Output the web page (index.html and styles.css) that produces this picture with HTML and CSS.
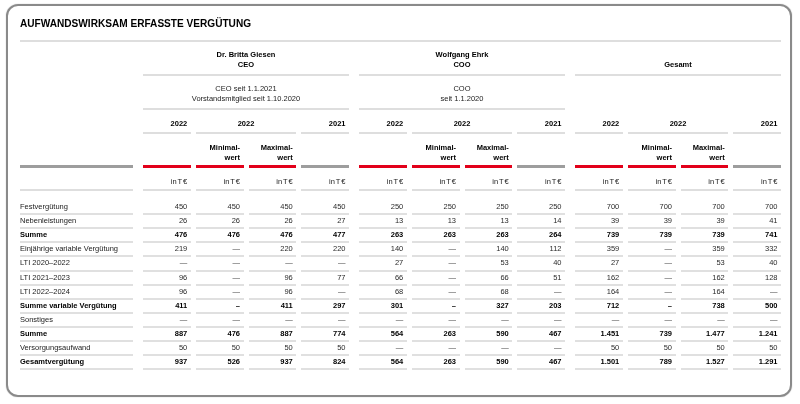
FILE: index.html
```html
<!DOCTYPE html>
<html lang="de">
<head>
<meta charset="utf-8">
<title>Aufwandswirksam erfasste Vergütung</title>
<link rel="stylesheet" href="styles.css">
</head>
<body>
<div class="frame">
  <h1 class="title">AUFWANDSWIRKSAM ERFASSTE VERGÜTUNG</h1>

  <div class="row hn">
    <div class="g1">Dr. Britta Giesen<br>CEO</div>
    <div class="g2">Wolfgang Ehrk<br>COO</div>
    <div class="g3">Gesamt</div>
  </div>

  <div class="row hs">
    <div class="g1">CEO seit 1.1.2021<br>Vorstandsmitglied seit 1.10.2020</div>
    <div class="g2">COO<br>seit 1.1.2020</div>
  </div>

  <div class="row hy">
    <div class="a1">2022</div><div class="m1">2022</div><div class="z1">2021</div>
    <div class="a2">2022</div><div class="m2">2022</div><div class="z2">2021</div>
    <div class="a3">2022</div><div class="m3">2022</div><div class="z3">2021</div>
  </div>

  <div class="row hm">
    <div class="lab gray"></div>
    <div class="red"></div><div class="red">Minimal-<br>wert</div><div class="red">Maximal-<br>wert</div><div class="gray"></div>
    <div class="red"></div><div class="red">Minimal-<br>wert</div><div class="red">Maximal-<br>wert</div><div class="gray"></div>
    <div class="red"></div><div class="red">Minimal-<br>wert</div><div class="red">Maximal-<br>wert</div><div class="gray"></div>
  </div>

  <div class="row hu">
    <div class="lab"></div>
    <div>in T €</div><div>in T €</div><div>in T €</div><div>in T €</div>
    <div>in T €</div><div>in T €</div><div>in T €</div><div>in T €</div>
    <div>in T €</div><div>in T €</div><div>in T €</div><div>in T €</div>
  </div>

  <div class="body">
    <div class="row d">
      <div class="lab">Festvergütung</div>
      <div>450</div><div>450</div><div>450</div><div>450</div>
      <div>250</div><div>250</div><div>250</div><div>250</div>
      <div>700</div><div>700</div><div>700</div><div>700</div>
    </div>
    <div class="row d">
      <div class="lab">Nebenleistungen</div>
      <div>26</div><div>26</div><div>26</div><div>27</div>
      <div>13</div><div>13</div><div>13</div><div>14</div>
      <div>39</div><div>39</div><div>39</div><div>41</div>
    </div>
    <div class="row d b">
      <div class="lab">Summe</div>
      <div>476</div><div>476</div><div>476</div><div>477</div>
      <div>263</div><div>263</div><div>263</div><div>264</div>
      <div>739</div><div>739</div><div>739</div><div>741</div>
    </div>
    <div class="row d">
      <div class="lab">Einjährige variable Vergütung</div>
      <div>219</div><div class="na">—</div><div>220</div><div>220</div>
      <div>140</div><div class="na">—</div><div>140</div><div>112</div>
      <div>359</div><div class="na">—</div><div>359</div><div>332</div>
    </div>
    <div class="row d">
      <div class="lab">LTI 2020–2022</div>
      <div class="na">—</div><div class="na">—</div><div class="na">—</div><div class="na">—</div>
      <div>27</div><div class="na">—</div><div>53</div><div>40</div>
      <div>27</div><div class="na">—</div><div>53</div><div>40</div>
    </div>
    <div class="row d">
      <div class="lab">LTI 2021–2023</div>
      <div>96</div><div class="na">—</div><div>96</div><div>77</div>
      <div>66</div><div class="na">—</div><div>66</div><div>51</div>
      <div>162</div><div class="na">—</div><div>162</div><div>128</div>
    </div>
    <div class="row d">
      <div class="lab">LTI 2022–2024</div>
      <div>96</div><div class="na">—</div><div>96</div><div class="na">—</div>
      <div>68</div><div class="na">—</div><div>68</div><div class="na">—</div>
      <div>164</div><div class="na">—</div><div>164</div><div class="na">—</div>
    </div>
    <div class="row d b">
      <div class="lab">Summe variable Vergütung</div>
      <div>411</div><div>–</div><div>411</div><div>297</div>
      <div>301</div><div>–</div><div>327</div><div>203</div>
      <div>712</div><div>–</div><div>738</div><div>500</div>
    </div>
    <div class="row d">
      <div class="lab">Sonstiges</div>
      <div class="na">—</div><div class="na">—</div><div class="na">—</div><div class="na">—</div>
      <div class="na">—</div><div class="na">—</div><div class="na">—</div><div class="na">—</div>
      <div class="na">—</div><div class="na">—</div><div class="na">—</div><div class="na">—</div>
    </div>
    <div class="row d b">
      <div class="lab">Summe</div>
      <div>887</div><div>476</div><div>887</div><div>774</div>
      <div>564</div><div>263</div><div>590</div><div>467</div>
      <div>1.451</div><div>739</div><div>1.477</div><div>1.241</div>
    </div>
    <div class="row d">
      <div class="lab">Versorgungsaufwand</div>
      <div>50</div><div>50</div><div>50</div><div>50</div>
      <div class="na">—</div><div class="na">—</div><div class="na">—</div><div class="na">—</div>
      <div>50</div><div>50</div><div>50</div><div>50</div>
    </div>
    <div class="row d b">
      <div class="lab">Gesamtvergütung</div>
      <div>937</div><div>526</div><div>937</div><div>824</div>
      <div>564</div><div>263</div><div>590</div><div>467</div>
      <div>1.501</div><div>789</div><div>1.527</div><div>1.291</div>
    </div>
  </div>
</div>
</body>
</html>
```
FILE: styles.css
```css
* { box-sizing: border-box; }

html, body {
  margin: 0;
  padding: 0;
  background: #ffffff;
}

body {
  font-family: "Liberation Sans", Arial, sans-serif;
  color: #222222;
  width: 800px;
  height: 404px;
  overflow: hidden;
  -webkit-font-smoothing: antialiased;
}

.frame {
  margin: 4px 8px 0 6px;
  width: 786px;
  height: 393px;
  border: 2px solid #8a8a8a;
  border-radius: 12px;
  padding: 12px 9px 0 12px;
  will-change: transform;
  box-shadow: 0 0 1px rgba(0, 0, 0, 0.4);
}

.title {
  margin: 0;
  font-size: 10.1px;
  line-height: 12px;
  font-weight: bold;
  color: #000000;
  padding-bottom: 10px;
  border-bottom: 2px solid #dedede;
}

.row {
  display: grid;
  grid-template-columns: 113px 0 repeat(4, 1fr) 0 repeat(4, 1fr) 0 repeat(4, 1fr);
  column-gap: 5px;
  font-size: 7.5px;
  line-height: 10px;
}

.g1 { grid-column: 3 / 7; }
.g2 { grid-column: 8 / 12; }
.g3 { grid-column: 13 / 17; }

/* name row */
.hn > div {
  height: 34px;
  display: flex;
  align-items: flex-end;
  justify-content: center;
  text-align: center;
  padding-bottom: 4px;
  font-weight: bold;
  color: #000000;
  border-bottom: 2px solid #dedede;
}

/* subtitle row */
.hs { height: 34px; }
.hs > div {
  height: 34px;
  display: flex;
  align-items: flex-end;
  justify-content: center;
  text-align: center;
  padding-bottom: 4px;
  color: #222222;
  border-bottom: 2px solid #dedede;
}

/* year row */
.hy > div {
  height: 24px;
  padding: 9px 3.5px 3px 0;
  font-weight: bold;
  color: #000000;
  text-align: right;
  border-bottom: 2px solid #dedede;
}
.hy > .m1, .hy > .m2, .hy > .m3 { text-align: center; padding-right: 0; }
.a1 { grid-column: 3; }
.m1 { grid-column: 4 / 6; }
.z1 { grid-column: 6; }
.a2 { grid-column: 8; }
.m2 { grid-column: 9 / 11; }
.z2 { grid-column: 11; }
.a3 { grid-column: 13; }
.m3 { grid-column: 14 / 16; }
.z3 { grid-column: 16; }

/* min / max row */
.hm > div {
  height: 34px;
  padding: 9px 3.5px 2px 0;
  font-weight: bold;
  color: #000000;
  text-align: right;
}
.hm > .red { border-bottom: 3px solid #e2001a; }
.hm > .gray { border-bottom: 3px solid #9d9d9d; }

/* unit row */
.hu > div {
  height: 23px;
  padding: 9px 3.5px 2px 0;
  text-align: right;
  color: #222222;
  word-spacing: -1px;
  border-bottom: 2px solid #dedede;
}

.hm > :nth-child(2), .hu > :nth-child(2),
.d > :nth-child(2) { grid-column-start: 3; }
.hm > :nth-child(6), .hu > :nth-child(6),
.d > :nth-child(6) { grid-column-start: 8; }
.hm > :nth-child(10), .hu > :nth-child(10),
.d > :nth-child(10) { grid-column-start: 13; }

.body { padding-top: 10px; }

.d > div {
  height: 14.12px;
  line-height: 12.12px;
  padding-right: 3.5px;
  text-align: right;
  color: #2a2a2a;
  border-bottom: 2px solid #e0e0e0;
}
.d > .lab {
  text-align: left;
  padding-right: 0;
  color: #222222;
}
.d.b > div {
  font-weight: bold;
  color: #000000;
}
.d > .na { color: #444444; }
```
